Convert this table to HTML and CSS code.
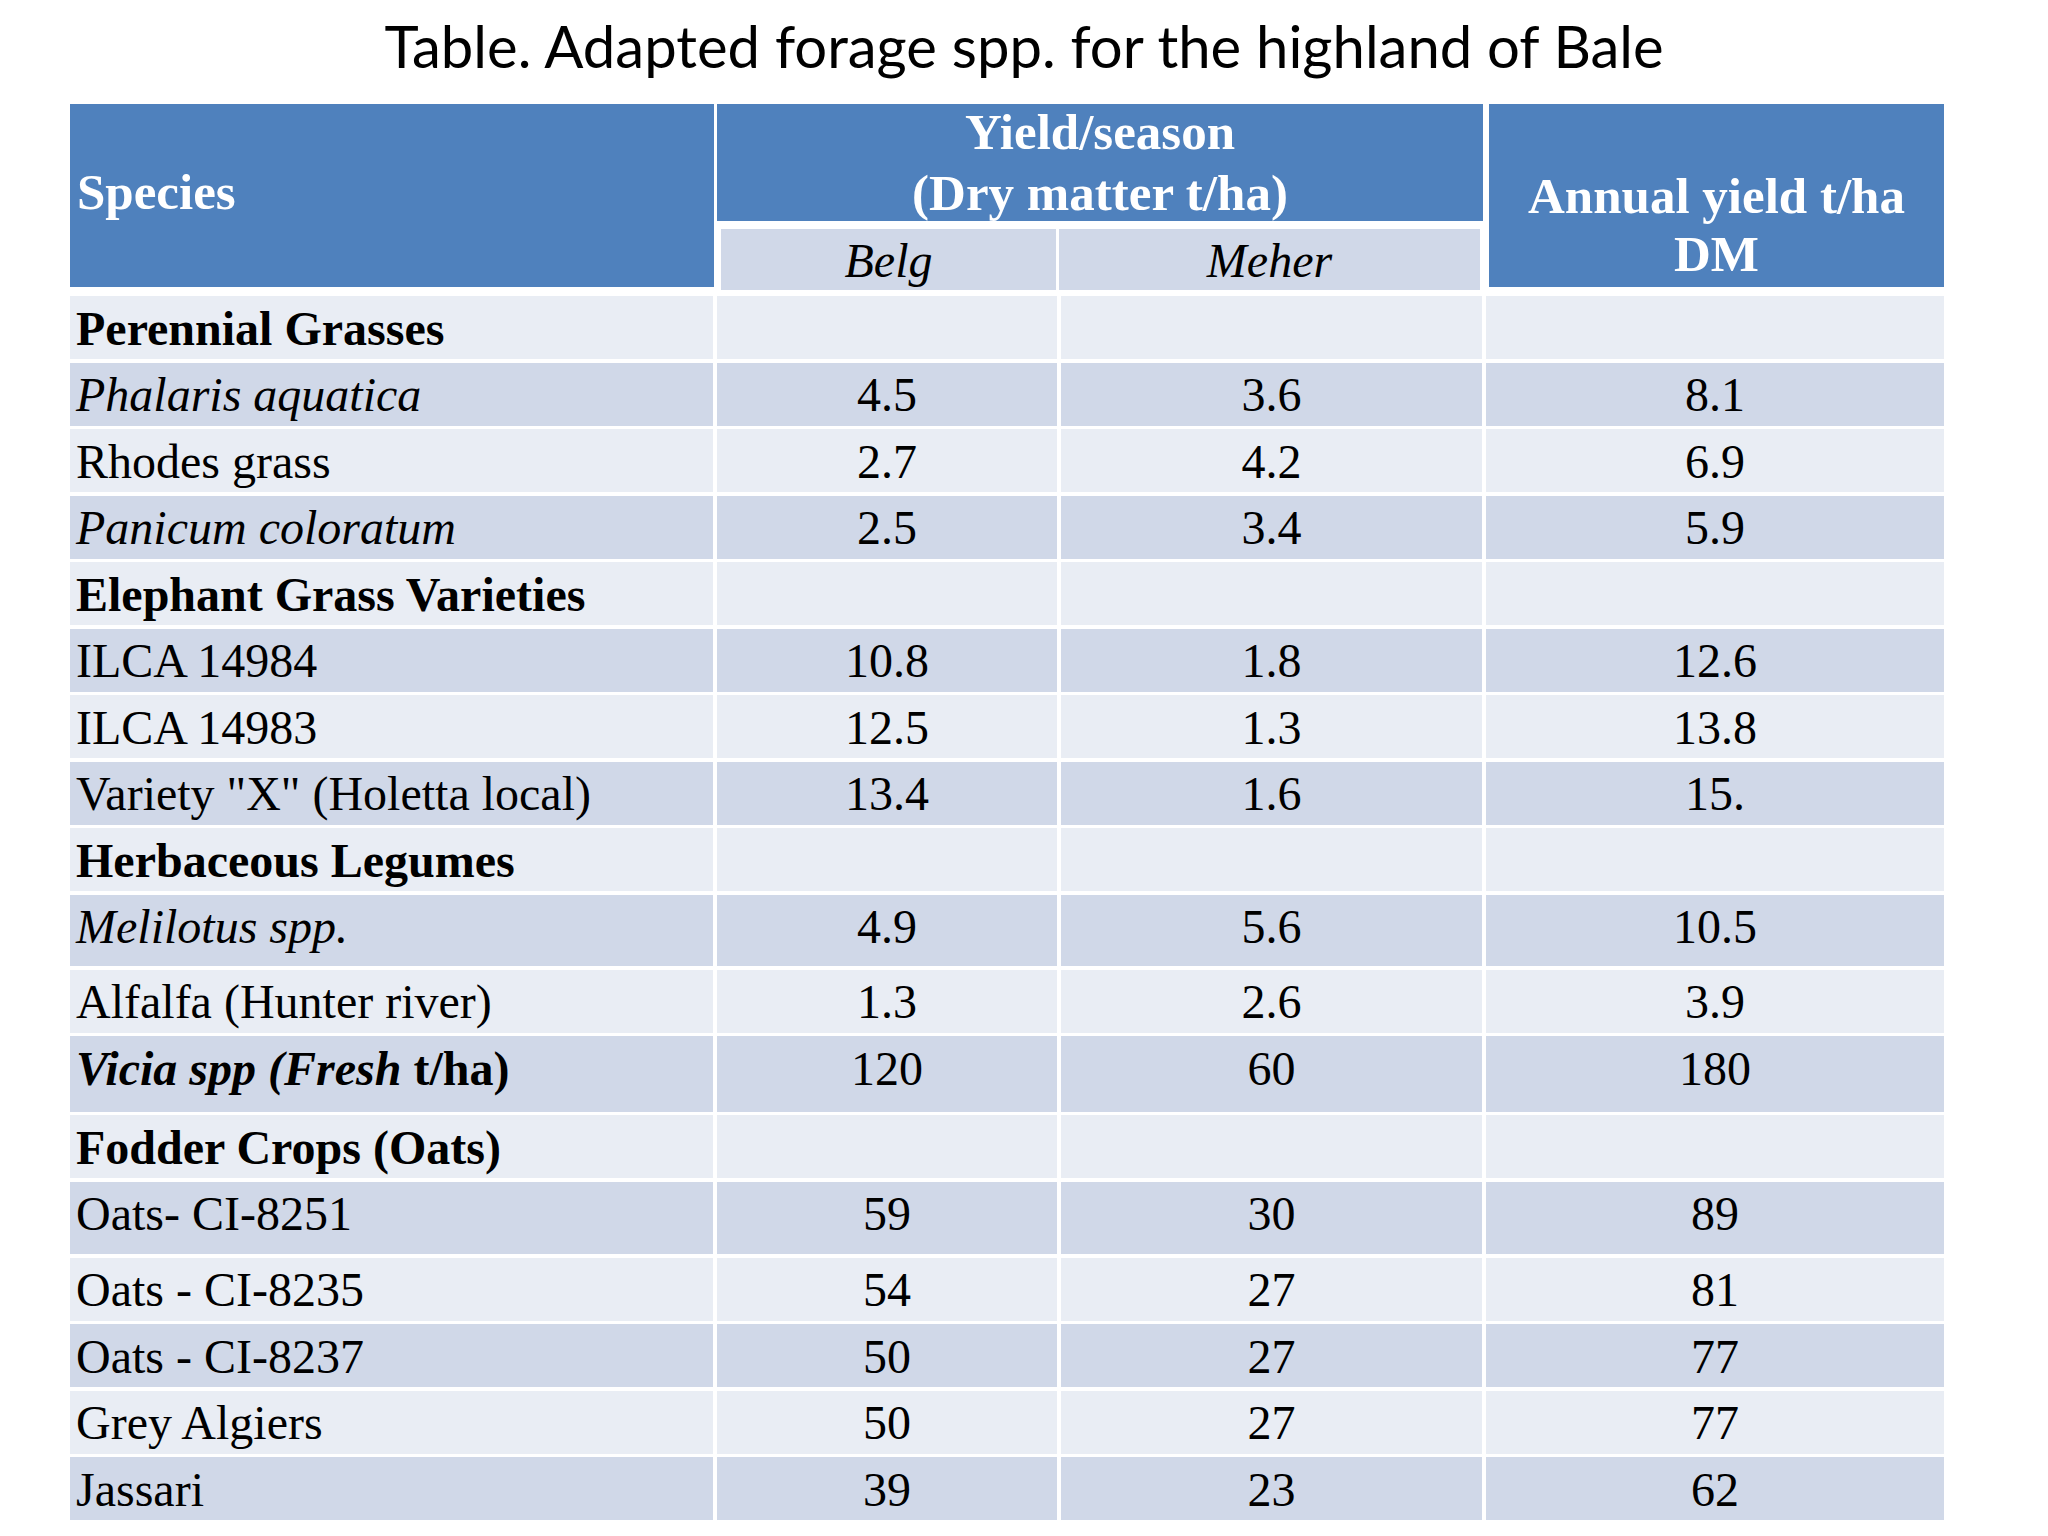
FILE: index.html
```html
<!DOCTYPE html>
<html lang="en">
<head>
<meta charset="utf-8">
<title>Adapted forage spp.</title>
<link rel="stylesheet" href="styles.css">
</head>
<body>
<div class="slide">
  <h1 class="title">Table. Adapted forage spp. for the highland of Bale</h1>
  <div class="table">
    <div class="thead">
      <div class="h-species"><span>Species</span></div>
      <div class="h-yield"><div class="h-yield-text">Yield/season<br>(Dry matter t/ha)</div></div>
      <div class="h-sub">
        <div class="h-season h-belg">Belg</div>
        <div class="h-season h-meher">Meher</div>
      </div>
      <div class="h-annual">Annual yield t/ha<br>DM</div>
    </div>
    <div class="tbody">
      <div class="row light"><div class="c name b">Perennial Grasses</div><div class="c"></div><div class="c"></div><div class="c"></div></div>
      <div class="row dark"><div class="c name i">Phalaris aquatica</div><div class="c num">4.5</div><div class="c num">3.6</div><div class="c num">8.1</div></div>
      <div class="row light"><div class="c name">Rhodes grass</div><div class="c num">2.7</div><div class="c num">4.2</div><div class="c num">6.9</div></div>
      <div class="row dark"><div class="c name i">Panicum coloratum</div><div class="c num">2.5</div><div class="c num">3.4</div><div class="c num">5.9</div></div>
      <div class="row light"><div class="c name b">Elephant Grass Varieties</div><div class="c"></div><div class="c"></div><div class="c"></div></div>
      <div class="row dark"><div class="c name">ILCA 14984</div><div class="c num">10.8</div><div class="c num">1.8</div><div class="c num">12.6</div></div>
      <div class="row light"><div class="c name">ILCA 14983</div><div class="c num">12.5</div><div class="c num">1.3</div><div class="c num">13.8</div></div>
      <div class="row dark"><div class="c name">Variety "X" (Holetta local)</div><div class="c num">13.4</div><div class="c num">1.6</div><div class="c num">15.</div></div>
      <div class="row light"><div class="c name b">Herbaceous Legumes</div><div class="c"></div><div class="c"></div><div class="c"></div></div>
      <div class="row dark tall-a"><div class="c name i">Melilotus spp.</div><div class="c num">4.9</div><div class="c num">5.6</div><div class="c num">10.5</div></div>
      <div class="row light"><div class="c name">Alfalfa (Hunter river)</div><div class="c num">1.3</div><div class="c num">2.6</div><div class="c num">3.9</div></div>
      <div class="row dark tall-b"><div class="c name b"><i>Vicia spp (Fresh</i> t/ha)</div><div class="c num">120</div><div class="c num">60</div><div class="c num">180</div></div>
      <div class="row light"><div class="c name b">Fodder Crops (Oats)</div><div class="c"></div><div class="c"></div><div class="c"></div></div>
      <div class="row dark tall-c"><div class="c name">Oats- CI-8251</div><div class="c num">59</div><div class="c num">30</div><div class="c num">89</div></div>
      <div class="row light"><div class="c name">Oats - CI-8235</div><div class="c num">54</div><div class="c num">27</div><div class="c num">81</div></div>
      <div class="row dark"><div class="c name">Oats - CI-8237</div><div class="c num">50</div><div class="c num">27</div><div class="c num">77</div></div>
      <div class="row light"><div class="c name">Grey Algiers</div><div class="c num">50</div><div class="c num">27</div><div class="c num">77</div></div>
      <div class="row dark"><div class="c name">Jassari</div><div class="c num">39</div><div class="c num">23</div><div class="c num">62</div></div>
    </div>
  </div>
</div>
</body>
</html>
```

FILE: styles.css
```css
html, body {
  margin: 0;
  padding: 0;
  background: #ffffff;
}

.slide {
  width: 2048px;
  height: 1536px;
  overflow: hidden;
  padding-top: 17px;
  box-sizing: border-box;
  background: #ffffff;
}

.title {
  margin: 0;
  font-family: Lato, "Open Sans", sans-serif;
  font-weight: 400;
  font-size: 58px;
  line-height: 58px;
  text-align: center;
  color: #000000;
}

.table {
  margin: 29px 0 0 70px;
  width: 1874px;
  font-family: "Liberation Serif", "Times New Roman", serif;
  color: #000000;
}

/* header */
.thead {
  display: grid;
  grid-template-columns: 644px 766px 1fr;
  grid-template-rows: 117px 69px;
  column-gap: 3px;
  height: 186px;
  margin-bottom: 6px;
}

.h-species,
.h-yield,
.h-annual {
  background: #4f81bd;
  color: #ffffff;
  font-weight: 700;
  font-size: 51px;
}

.h-species {
  grid-column: 1;
  grid-row: 1 / span 2;
  height: 183px;
  align-self: start;
  box-sizing: border-box;
  padding: 59px 0 0 7px;
  line-height: 58px;
}

.h-yield {
  grid-column: 2;
  grid-row: 1;
  text-align: center;
  line-height: 61px;
}

.h-yield-text {
  margin-top: -2px;
}

.h-annual {
  grid-column: 3;
  grid-row: 1 / span 2;
  height: 183px;
  align-self: start;
  margin-left: 3px;
  text-align: center;
  box-sizing: border-box;
  padding-top: 63px;
  line-height: 58px;
}

.h-sub {
  grid-column: 2;
  grid-row: 2;
  display: flex;
  gap: 3px;
  padding: 8px 3px 0 4px;
  background: #ffffff;
}

.h-season {
  background: #d0d8e8;
  font-style: italic;
  font-size: 48px;
  line-height: 1.15;
  text-align: center;
  padding-top: 4px;
  box-sizing: border-box;
  height: 61px;
}

.h-belg { flex: 0 0 335px; }
.h-meher { flex: 1 1 auto; }

/* body */
.tbody {
  display: flex;
  flex-direction: column;
  gap: 3.5px;
}

.row {
  display: grid;
  grid-template-columns: 643px 340px 421px 458px;
  column-gap: 4px;
  height: 63px;
}

.row.tall-a { height: 71.5px; }
.row.tall-b { height: 75.5px; }
.row.tall-c { height: 72.5px; }

.c {
  font-size: 48px;
  line-height: 1.15;
  padding-top: 4.5px;
  box-sizing: border-box;
  white-space: nowrap;
}

.light .c { background: #e9edf4; }
.dark .c { background: #d0d8e8; }

.name { padding-left: 6px; }
.num { text-align: center; }
.b { font-weight: 700; }
.i { font-style: italic; }
```
